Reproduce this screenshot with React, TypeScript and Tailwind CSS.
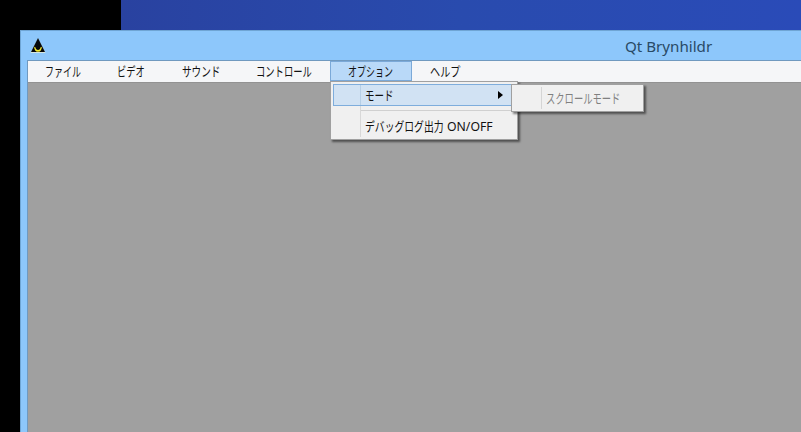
const jp = "font-['Noto_Sans','Noto_Sans_CJK_JP',sans-serif]";

type LabelProps = { text: string; box: string; scale: string };

// Condensed UI label: the box keeps the narrowed width in the flow.
function Label({ text, box, scale }: LabelProps) {
  return (
    <span className={`block shrink-0 ${box}`}>
      <span className={`block w-max origin-left whitespace-nowrap ${scale}`}>{text}</span>
    </span>
  );
}

const menus = [
  { text: "ファイル", cell: "w-[72px] pl-[17px]", box: "w-[36px]", scale: "scale-x-[0.69]" },
  { text: "ビデオ", cell: "w-[65px] pl-[17px]", box: "w-[29px]", scale: "scale-x-[0.71]" },
  { text: "サウンド", cell: "w-[74px] pl-[17px]", box: "w-[38px]", scale: "scale-x-[0.74]" },
  { text: "コントロール", cell: "w-[91px] pl-[17px]", box: "w-[56px]", scale: "scale-x-[0.715]" },
];

function TriangleIcon() {
  return (
    <svg className="h-4 w-4" viewBox="0 0 16 16">
      <path d="M8 0.5L15.6 15H.4z" fill="#d5e6df" />
      <path d="M8 0L15 14H1z" fill="#05080c" />
      <path d="M4.3 8.8C3.6 15 12.4 15 11.7 8.8L10.6 9.2C10.4 12.6 5.6 12.6 5.4 9.2z" fill="#f3e82e" />
      <path d="M5.2 12h5.6l-1 1.4H6.2z" fill="#f3e82e" />
      <path d="M7 8h2v3.4H7z" fill="#05080c" />
    </svg>
  );
}

export default function App() {
  return (
    <div className={`h-[432px] w-[801px] overflow-hidden bg-black text-[13px] leading-[18px] text-[#111] ${jp}`}>
      <div className="ml-[121px] h-[30px] bg-linear-to-r from-[#2942a0] via-[#294bae] to-[#2a4bb8]" />
      <div className="ml-[20px] flex h-[402px] flex-col border-t border-l border-[#6fa5d4] bg-[#8dc7fb]">
        <header className="relative h-[29px] shrink-0 pt-[7px] pl-[9px]">
          <TriangleIcon />
          <h1 className="absolute top-[3px] left-[604px] origin-left scale-x-[1.01] font-['Noto_Sans',sans-serif] text-[15px] leading-[24px] whitespace-nowrap text-[#294a66]">
            Qt Brynhildr
          </h1>
        </header>
        <div className="ml-[6px] flex min-h-0 flex-1 flex-col border-t border-l border-[#7099bf]">
          <nav className="relative z-10 flex h-[22px] shrink-0 border-b border-[#929292] bg-[#f5f6f8]">
            {menus.map((m) => (
              <div key={m.text} className={`flex shrink-0 items-start pt-px ${m.cell}`}>
                <Label text={m.text} box={m.box} scale={m.scale} />
              </div>
            ))}
            <div className="relative h-[20px] w-[82px] shrink-0 border border-[#7ba9d8] bg-[#b9d9f8] pl-[17px]">
              <Label text="オプション" box="w-[45px]" scale="scale-x-[0.69]" />
              <div className="absolute top-[19px] -left-px h-[59px] w-[188px] border border-[#a0a0a0] bg-[#f0f0f0] px-px py-[2px] shadow-[2px_2px_2px_rgba(0,0,0,0.5)]">
                <div className="ml-px flex h-[22px] items-center border border-[#7eaddc] bg-[#d1e2f3] pr-[12px]">
                  <div className="h-full w-[27px] shrink-0 border-r border-[#b6cfe6]" />
                  <div className="flex flex-1 items-center pl-[4px]">
                    <Label text="モード" box="w-[29px]" scale="scale-x-[0.73]" />
                  </div>
                  <svg className="h-[8px] w-[5px]" viewBox="0 0 5 8"><path d="M0 0l5 4-5 4z" fill="#000" /></svg>
                </div>
                <div className="flex h-[31px]">
                  <div className="w-[29px] shrink-0 border-r border-[#d8d8d8]" />
                  <div className="flex-1 pt-[4px]">
                    <div className="border-t border-[#d0d0d0] pt-[6px] pl-[4px]">
                      <div className="flex">
                        <Label text="デバッグログ出力" box="w-[82px]" scale="scale-x-[0.755]" />
                        <Label text="ON/OFF" box="w-[46px]" scale="scale-x-[0.94]" />
                      </div>
                    </div>
                  </div>
                </div>
              </div>
              <div className="absolute top-[22px] left-[180px] flex h-[28px] w-[133px] items-start border border-[#a0a0a0] bg-[#f0f0f0] py-[2px] text-[#808080] shadow-[2px_2px_2px_rgba(0,0,0,0.5)]">
                <div className="h-full w-[30px] shrink-0 border-r border-[#d5d5d5]" />
                <div className="pt-[2px] pl-[4px]">
                  <Label text="スクロールモード" box="w-[76px]" scale="scale-x-[0.715]" />
                </div>
              </div>
            </div>
            <div className="flex shrink-0 items-start pt-px pl-[18px]">
              <Label text="ヘルプ" box="w-[32px]" scale="scale-x-[0.78]" />
            </div>
          </nav>
          <main className="flex-1 bg-[#a0a0a0]" />
        </div>
      </div>
    </div>
  );
}
